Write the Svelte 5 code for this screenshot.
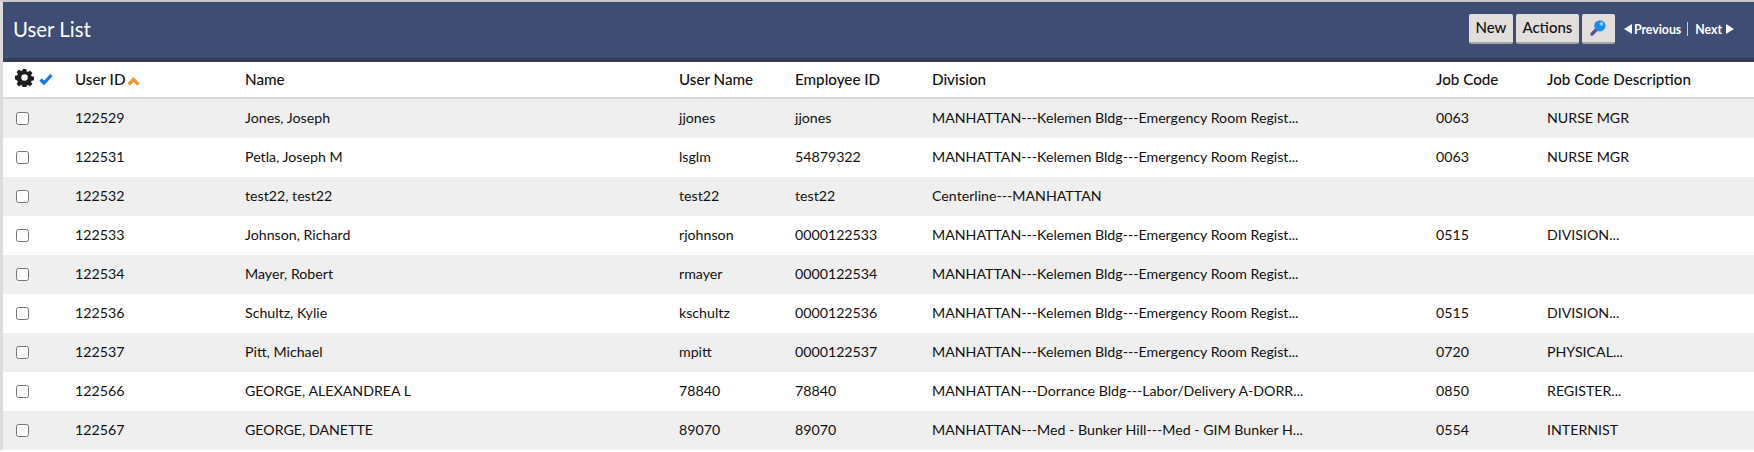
<script>
  const columns = [
    { label: 'User Name', key: 'userName' },
    { label: 'Employee ID', key: 'employeeId' },
    { label: 'Division', key: 'division' },
    { label: 'Job Code', key: 'jobCode' },
    { label: 'Job Code Description', key: 'jobDesc' }
  ];

  const kelemen = 'MANHATTAN---Kelemen Bldg---Emergency Room Regist...';

  const users = [
    { id: '122529', name: 'Jones, Joseph', userName: 'jjones', employeeId: 'jjones', division: kelemen, jobCode: '0063', jobDesc: 'NURSE MGR' },
    { id: '122531', name: 'Petla, Joseph M', userName: 'lsglm', employeeId: '54879322', division: kelemen, jobCode: '0063', jobDesc: 'NURSE MGR' },
    { id: '122532', name: 'test22, test22', userName: 'test22', employeeId: 'test22', division: 'Centerline---MANHATTAN', jobCode: '', jobDesc: '' },
    { id: '122533', name: 'Johnson, Richard', userName: 'rjohnson', employeeId: '0000122533', division: kelemen, jobCode: '0515', jobDesc: 'DIVISION...' },
    { id: '122534', name: 'Mayer, Robert', userName: 'rmayer', employeeId: '0000122534', division: kelemen, jobCode: '', jobDesc: '' },
    { id: '122536', name: 'Schultz, Kylie', userName: 'kschultz', employeeId: '0000122536', division: kelemen, jobCode: '0515', jobDesc: 'DIVISION...' },
    { id: '122537', name: 'Pitt, Michael', userName: 'mpitt', employeeId: '0000122537', division: kelemen, jobCode: '0720', jobDesc: 'PHYSICAL...' },
    { id: '122566', name: 'GEORGE, ALEXANDREA L', userName: '78840', employeeId: '78840', division: 'MANHATTAN---Dorrance Bldg---Labor/Delivery A-DORR...', jobCode: '0850', jobDesc: 'REGISTER...' },
    { id: '122567', name: 'GEORGE, DANETTE', userName: '89070', employeeId: '89070', division: 'MANHATTAN---Med - Bunker Hill---Med - GIM Bunker H...', jobCode: '0554', jobDesc: 'INTERNIST' }
  ];
</script>

<div class="page">
  <header class="title-bar">
    <h1>User List</h1>
    <div class="tools">
      <button class="btn">New</button>
      <button class="btn">Actions</button>
      <button class="btn icon-btn" aria-label="Search">
        <svg width="18" height="18" viewBox="0 0 24 24">
          <path d="M10 14 L4 20" stroke="#5a4e9c" stroke-width="4.5" stroke-linecap="round" />
          <circle cx="14.5" cy="9" r="7.5" fill="#1a8fe8" />
          <circle cx="16.5" cy="6.5" r="2.4" fill="#8fd0fa" />
        </svg>
      </button>
      <nav class="pager">
        <span class="tri left"></span>
        <span>Previous</span>
        <span class="sep"></span>
        <span>Next</span>
        <span class="tri right"></span>
      </nav>
    </div>
  </header>

  <div class="grid head">
    <div class="tool-cell">
      <svg class="gear" width="19" height="19" viewBox="0 0 20 20">
        <path fill="#1d1d1d" fill-rule="evenodd" d="M8.2 1h3.6l.5 2.5 1.4.6 2.1-1.4 2.5 2.5-1.4 2.1.6 1.4 2.5.5v3.6l-2.5.5-.6 1.4 1.4 2.1-2.5 2.5-2.1-1.4-1.4.6-.5 2.5H8.2l-.5-2.5-1.4-.6-2.1 1.4-2.5-2.5 1.4-2.1-.6-1.4L0 11.8V8.2l2.5-.5.6-1.4-1.4-2.1 2.5-2.5 2.1 1.4 1.4-.6zM10 6.6a3.4 3.4 0 1 0 0 6.8 3.4 3.4 0 0 0 0-6.8z" />
      </svg>
      <svg width="14" height="12" viewBox="0 0 14 12">
        <path d="M1.5 6.5 L5 10 L12.5 2" fill="none" stroke="#1677e0" stroke-width="3.2" />
      </svg>
    </div>
    <div class="sorted">
      User ID
      <svg width="13" height="9" viewBox="0 0 13 9">
        <path d="M1.5 7.5 L6.5 2.5 L11.5 7.5" fill="none" stroke="#e59a35" stroke-width="3.4" />
      </svg>
    </div>
    <div>Name</div>
    {#each columns as col}
      <div>{col.label}</div>
    {/each}
  </div>

  {#each users as user, i}
    <div class="grid row" class:odd={i % 2 === 0}>
      <div class="box-cell"><input type="checkbox" /></div>
      <div>{user.id}</div>
      <div>{user.name}</div>
      {#each columns as col}
        <div>{user[col.key]}</div>
      {/each}
    </div>
  {/each}
</div>

<style>
  :global(body) {
    margin: 0;
    background: #fff;
  }

  .page {
    font-family: Lato, "Open Sans", sans-serif;
    font-size: 14.2px;
    color: #111;
    border-top: 2px solid #c9c9c9;
    border-left: 3px solid #dcdcdc;
  }

  .title-bar {
    display: flex;
    justify-content: space-between;
    align-items: center;
    height: 60px;
    padding: 0 20px 2px 10px;
    box-sizing: border-box;
    background: #3f4c74;
    border-bottom: 4px solid #323c5c;
  }

  h1 {
    margin: 0;
    font-size: 20.4px;
    font-weight: 400;
    color: #fff;
  }

  .tools {
    display: flex;
    align-items: center;
    gap: 3px;
  }

  .btn {
    height: 30px;
    padding: 0 6.5px 2px;
    font: 500 15px Lato, sans-serif;
    color: #111;
    background: #e2dedc;
    border: none;
    border-bottom: 2px solid #a5a3a3;
    border-radius: 2px;
  }

  .icon-btn {
    display: flex;
    align-items: center;
    justify-content: center;
    width: 33px;
    padding: 0;
  }

  .pager {
    display: flex;
    align-items: center;
    gap: 4px;
    margin-left: 6px;
    font-size: 12.3px;
    font-weight: 700;
    color: #fff;
  }

  .sep {
    width: 1px;
    height: 14px;
    margin: 0 3px 0 2px;
    background: #c8cede;
  }

  .tri {
    width: 0;
    height: 0;
    border-top: 5px solid transparent;
    border-bottom: 5px solid transparent;
  }

  .tri.left {
    margin-right: -2px;
    border-right: 8px solid #fff;
  }

  .tri.right {
    border-left: 8px solid #fff;
  }

  .grid {
    display: grid;
    grid-template-columns: 72px 170px 434px 116px 137px 504px 111px 1fr;
    align-items: center;
  }

  .head {
    box-sizing: content-box;
    height: 33px;
    padding-bottom: 2px;
    border-bottom: 2px solid #d9d9d9;
    font-size: 15.2px;
    font-weight: 500;
  }

  .tool-cell {
    display: flex;
    align-items: center;
    gap: 5px;
    padding-left: 12px;
  }

  .gear {
    margin-bottom: 3px;
  }

  .sorted svg {
    margin-left: -2px;
    vertical-align: -1px;
  }

  .row {
    height: 39px;
  }

  .row.odd {
    background: #efefef;
  }

  .row > div:not(.box-cell) {
    padding-bottom: 2px;
  }

  .box-cell {
    display: flex;
    padding-left: 13px;
  }

  input[type="checkbox"] {
    width: 13px;
    height: 13px;
    margin: 0;
  }
</style>
